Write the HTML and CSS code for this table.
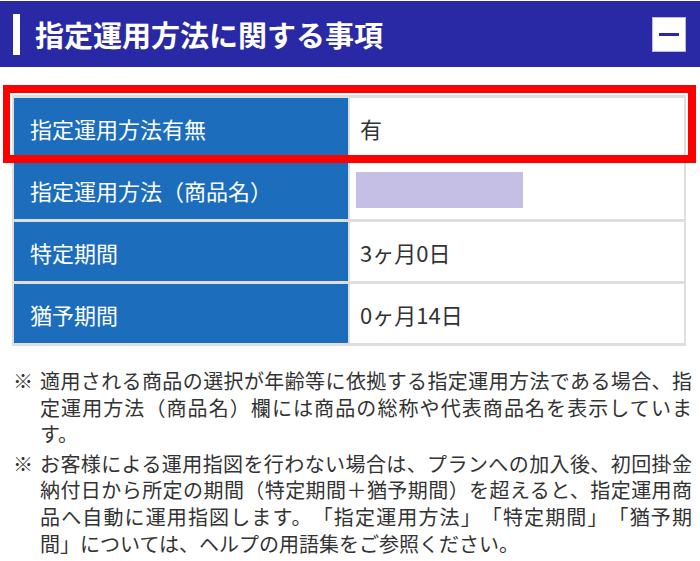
FILE: index.html
```html
<!DOCTYPE html>
<html lang="ja">
<head>
<meta charset="utf-8">
<link rel="stylesheet" href="styles.css">
</head>
<body>
<div class="page">
  <header class="sec-head">
    <span class="bar"></span>
    <h2 class="title">指定運用方法に関する事項</h2>
    <button class="toggle" type="button" aria-label="閉じる"><span class="dash"></span></button>
  </header>

  <div class="table-wrap">
    <table class="info">
      <tr>
        <td class="label">指定運用方法有無</td>
        <td class="value">有</td>
      </tr>
      <tr>
        <td class="label">指定運用方法（商品名）</td>
        <td class="value"><span class="masked"></span></td>
      </tr>
      <tr>
        <td class="label">特定期間</td>
        <td class="value">3ヶ月0日</td>
      </tr>
      <tr>
        <td class="label">猶予期間</td>
        <td class="value">0ヶ月14日</td>
      </tr>
    </table>
    <div class="highlight"></div>
  </div>

  <div class="notes">
    <p class="note"><span class="mark">※</span><span class="txt">適用される商品の選択が年齢等に依拠する指定運用方法である場合、指定運用方法（商品名）欄には商品の総称や代表商品名を表示しています。</span></p>
    <p class="note"><span class="mark">※</span><span class="txt">お客様による運用指図を行わない場合は、プランへの加入後、初回掛金納付日から所定の期間（特定期間＋猶予期間）を超えると、指定運用商品へ自動に運用指図します。「指定運用方法」「特定期間」「猶予期間」については、ヘルプの用語集をご参照ください。</span></p>
  </div>
</div>
</body>
</html>
```

FILE: styles.css
```css
* { box-sizing: border-box; }

html, body {
  margin: 0;
  padding: 0;
  background: #ffffff;
}

body {
  padding-top: 1px;
  font-family: "Noto Sans CJK JP", "Noto Sans", sans-serif;
  color: #333333;
  text-spacing-trim: space-all;
}

.sec-head {
  display: flex;
  align-items: center;
  height: 66px;
  padding: 0 14px 0 13px;
  background: #2929a6;
}

.bar {
  width: 7px;
  height: 41px;
  background: #ffffff;
  margin-right: 15px;
  flex: none;
}

.title {
  margin: 0;
  font-size: 29px;
  font-weight: 700;
  line-height: 1;
  color: #ffffff;
}

.toggle {
  margin-left: auto;
  width: 34px;
  height: 35px;
  padding: 0;
  background: #ffffff;
  border: 1px solid #b9b9e2;
  display: flex;
  align-items: center;
  justify-content: center;
}

.dash {
  display: block;
  width: 20px;
  height: 3px;
  background: #2929a6;
}

.table-wrap {
  position: relative;
  padding: 28px 14px 0 12px;
}

.info {
  width: 674px;
  table-layout: fixed;
  border-collapse: separate;
  border-spacing: 0;
  border-top: 3px solid #dedede;
  border-left: 2px solid #dedede;
}

.info td {
  box-sizing: content-box;
  height: 59px;
  border-right: 2px solid #dedede;
  border-bottom: 3px solid #dedede;
  font-size: 22px;
  line-height: 1;
  vertical-align: middle;
  white-space: nowrap;
}

.info .label {
  width: 318px;
  background: #1d6dbd;
  color: #ffffff;
  padding: 0 0 0 16px;
}

.info .value {
  width: 324px;
  background: #ffffff;
  color: #333333;
  padding: 0 0 0 10px;
}

.masked {
  display: block;
  width: 167px;
  height: 36px;
  margin-left: -4px;
  background: #c5bfe6;
}

.highlight {
  position: absolute;
  left: 3px;
  top: 18px;
  width: 693px;
  height: 78px;
  border: 8px solid #ff0000;
  border-left-width: 7px;
  pointer-events: none;
}

.notes {
  padding: 22px 8px 0 13px;
}

.note {
  display: flex;
  margin: 0 0 3px;
  font-size: 20px;
  line-height: 26.6px;
  color: #333333;
}

.mark {
  flex: none;
  width: 27px;
}

.txt {
  flex: 1;
  text-align: justify;
}
```
